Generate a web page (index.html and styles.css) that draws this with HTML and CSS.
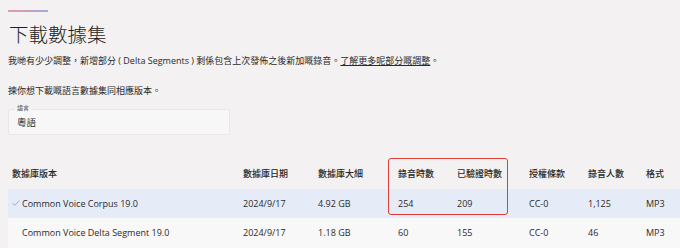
FILE: index.html
```html
<!DOCTYPE html>
<html lang="zh-HK">
<head>
<meta charset="utf-8">
<link rel="stylesheet" href="styles.css">
</head>
<body>
<main class="page">
  <div class="accent"></div>
  <h1 class="title">下載數據集</h1>
  <p class="intro">我哋有少少調整，新增部分 ( Delta Segments ) 剩係包含上次發佈之後新加嘅錄音。<a class="link" href="#">了解更多呢部分嘅調整</a>。</p>
  <p class="intro pick">揀你想下載嘅語言數據集同相應版本。</p>
  <div class="select">
    <span class="select-label">語言</span>
    <span class="select-value">粵語</span>
  </div>
  <div class="table-wrap">
    <table class="data">
      <colgroup>
        <col class="c1"><col class="c2"><col class="c3"><col class="c4"><col class="c5"><col class="c6"><col class="c7"><col class="c8">
      </colgroup>
      <thead>
        <tr>
          <th>數據庫版本</th><th>數據庫日期</th><th>數據庫大細</th><th>錄音時數</th><th>已驗證時數</th><th>授權條款</th><th>錄音人數</th><th>格式</th>
        </tr>
      </thead>
      <tbody>
        <tr class="selected">
          <td><span class="check"><svg width="8" height="6" viewBox="0 0 8 6"><path d="M0.5 3.2 L2.8 5.3 L7.5 0.6" fill="none" stroke="#8aa3cf" stroke-width="0.9"/></svg></span>Common Voice Corpus 19.0</td>
          <td>2024/9/17</td><td>4.92 GB</td><td>254</td><td>209</td><td>CC-0</td><td>1,125</td><td>MP3</td>
        </tr>
        <tr class="plain">
          <td><span class="check"></span>Common Voice Delta Segment 19.0</td>
          <td>2024/9/17</td><td>1.18 GB</td><td>60</td><td>155</td><td>CC-0</td><td>46</td><td>MP3</td>
        </tr>
      </tbody>
    </table>
    <div class="highlight"></div>
  </div>
</main>
</body>
</html>
```

FILE: styles.css
```css
html, body {
  margin: 0;
  padding: 0;
  background: #f3f1f1;
  overflow: hidden;
}
.page {
  width: 680px;
  height: 248px;
  padding: 10px 0 0 8px;
  box-sizing: border-box;
  font-family: "Open Sans", "Noto Sans CJK TC", sans-serif;
  color: #2a2a2a;
  font-size: 9px;
}
.accent {
  width: 40px;
  height: 1.5px;
  background: linear-gradient(90deg, #e69aa2, #a9a6dc);
}
.title {
  margin: 10px 0 0 1px;
  font-family: "Noto Sans CJK TC", sans-serif;
  font-weight: 300;
  font-size: 19.5px;
  line-height: 24px;
  color: #1e1e1e;
}
.intro {
  margin: 8px 0 0 0;
  line-height: 14px;
  font-size: 9px;
  color: #2a2a2a;
}
.intro.pick {
  margin-top: 16px;
}
.link {
  color: #2a2a2a;
  text-decoration: underline;
  text-underline-offset: 1px;
}
.select {
  position: relative;
  margin-top: 11px;
  width: 222px;
  height: 26px;
  box-sizing: border-box;
  background: #f8f7f7;
  border: 1px solid #e9e7e7;
  border-radius: 2px;
  display: flex;
  align-items: center;
  padding-left: 8px;
}
.select-label {
  position: absolute;
  top: -6px;
  left: 6px;
  padding: 0 2px;
  font-size: 6px;
  line-height: 8px;
  color: #555;
  background: linear-gradient(#f3f1f1 50%, #f8f7f7 50%);
}
.select-value {
  font-size: 9.5px;
  line-height: 12px;
  color: #2a2a2a;
  margin-top: 2px;
}
.table-wrap {
  position: relative;
  margin-top: 24px;
  width: 680px;
}
.data {
  border-collapse: collapse;
  table-layout: fixed;
  width: 680px;
  font-size: 9px;
}
.c1 { width: 231px; }
.c2 { width: 75px; }
.c3 { width: 80px; }
.c4 { width: 59px; }
.c5 { width: 72px; }
.c6 { width: 59px; }
.c7 { width: 58px; }
.c8 { width: auto; }
.data th, .data td {
  text-align: left;
  padding: 0 0 0 4px;
  white-space: nowrap;
}
.data th {
  height: 30px;
  font-weight: 500;
  color: #262626;
}
.data td {
  height: 29px;
  color: #2a2a2a;
}
.data tr.plain td {
  height: 30px;
}
.selected td {
  background: #e6ecf7;
}
.plain td {
  background: #f9f8f8;
}
.check {
  display: inline-block;
  width: 10px;
  vertical-align: middle;
  line-height: 0;
  margin-top: -2px;
}
.highlight {
  position: absolute;
  left: 380px;
  top: -1px;
  width: 120px;
  height: 57px;
  box-sizing: border-box;
  border: 1.5px solid #dc3f38;
  border-radius: 3px;
}
```
